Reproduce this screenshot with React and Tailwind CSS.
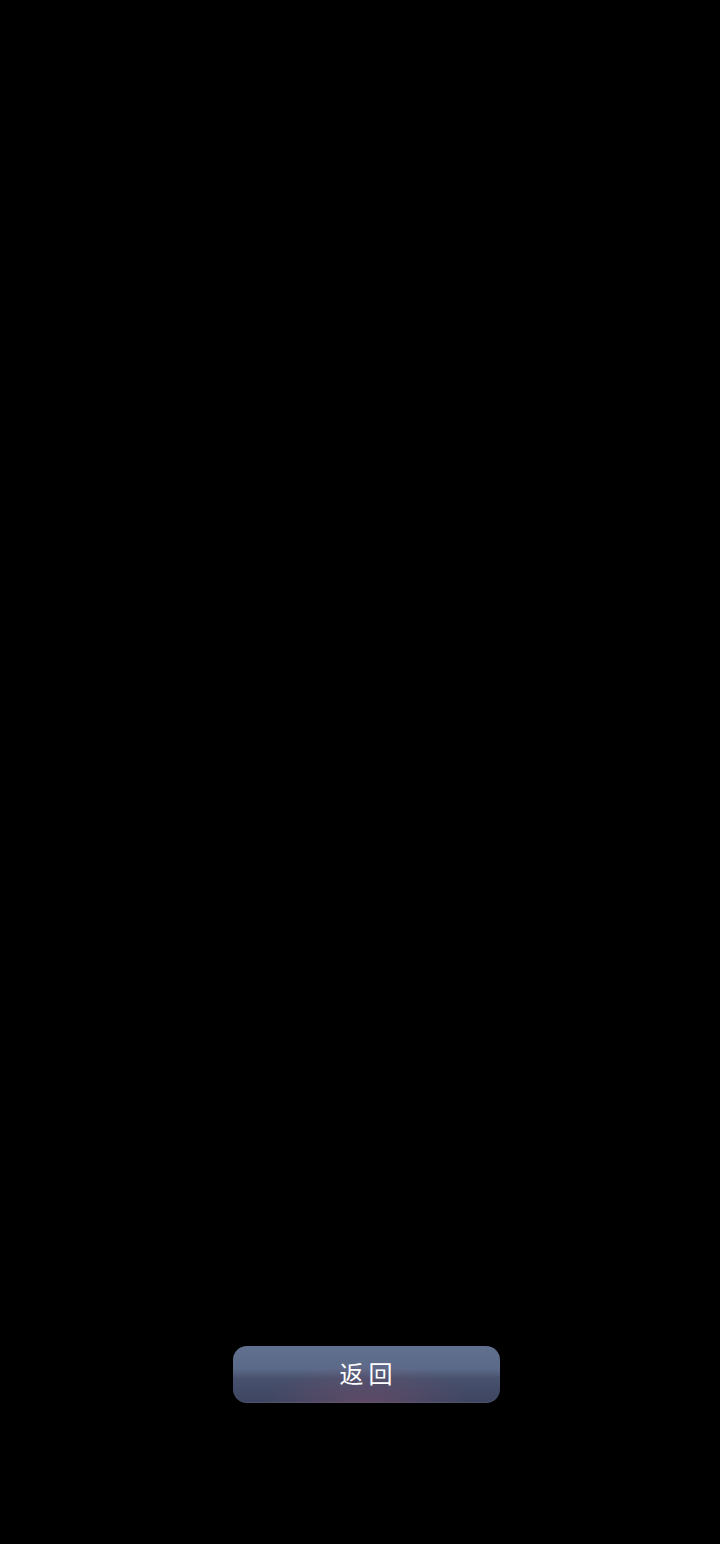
export default function App() {
  return (
    <div className="flex h-[1544px] w-full flex-col items-center justify-end bg-black pb-[141px]">
      <button
        type="button"
        className="relative ml-[13px] flex h-[57px] w-[267px] items-center justify-center overflow-hidden rounded-[14px] bg-[linear-gradient(180deg,#61708f_0%,#5b6a89_40%,#47506c_58%,#3d4560_100%)] shadow-[inset_0_-1px_0_rgba(255,255,255,0.08)]"
      >
        <span className="pointer-events-none absolute inset-0 bg-[radial-gradient(ellipse_at_50%_110%,rgba(140,80,110,0.45)_0%,rgba(140,80,110,0)_55%)]" />
        <span
          className="relative -mt-[4px] pl-[4px] text-[24px] tracking-[5px] text-white"
          style={{ fontFamily: '"Noto Sans CJK SC", sans-serif' }}
        >
          返回
        </span>
      </button>
    </div>
  );
}
